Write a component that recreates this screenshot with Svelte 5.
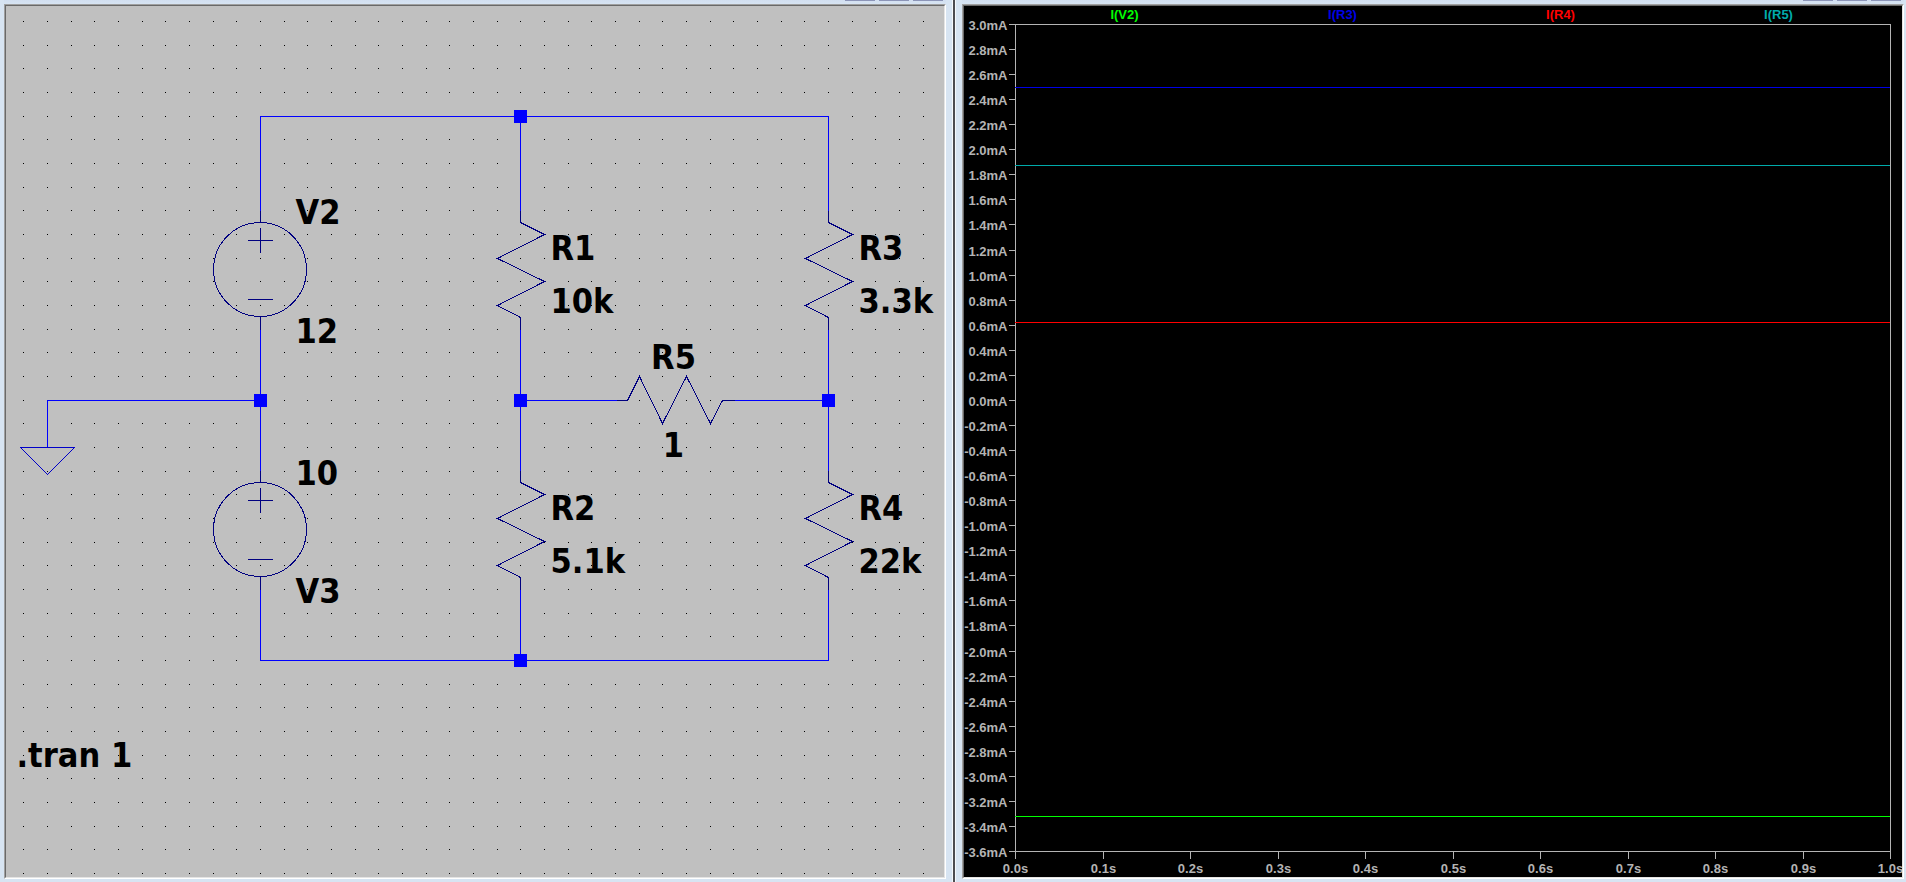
<script>
  let sheetW = $state(938);
  let sheetH = $state(871);
  let plotW = $state(938);
  let plotH = $state(871);

  // Grid points are 23 2/3 px apart, snapped to whole pixels.
  const STEP = 71 / 3;

  const dots = $derived.by(() => {
    let d = '';
    for (let r = 0; 21.34 + r * STEP < sheetH + 4; r++) {
      const y = Math.floor(21.34 + r * STEP);
      for (let c = 0; 22.99 + c * STEP < sheetW + 4; c++) {
        const x = Math.ceil(22.99 + c * STEP);
        d += `M${x - 0.5} ${y}h1`;
      }
    }
    return d;
  });

  const wires = [
    'M260 210V116H828V210',
    'M520 116V210',
    'M260 329V471',
    'M260 400H47V447',
    'M260 589V660H828V589',
    'M520 329V471',
    'M520 589V660',
    'M828 329V471',
    'M520 400H616',
    'M734 400H828'
  ];
  const ground = 'M20 447H74L47 474Z';

  const uprightResistors = [[520, 210], [828, 210], [520, 470], [828, 470]];
  const sources = [[260, 269], [260, 529]];
  const nodes = [[520, 116], [260, 400], [520, 400], [828, 400], [520, 660]];

  const labels = [
    { x: 295, y: 223, t: 'V2' },
    { x: 295, y: 342, t: '12' },
    { x: 295, y: 484, t: '10' },
    { x: 295, y: 602, t: 'V3' },
    { x: 550, y: 259, t: 'R1' },
    { x: 550, y: 312, t: '10k' },
    { x: 550, y: 519, t: 'R2' },
    { x: 550, y: 572, t: '5.1k' },
    { x: 858, y: 259, t: 'R3' },
    { x: 858, y: 312, t: '3.3k' },
    { x: 858, y: 519, t: 'R4' },
    { x: 858, y: 572, t: '22k' },
    { x: 673, y: 368, t: 'R5', mid: true },
    { x: 673, y: 456, t: '1', mid: true },
    { x: 16, y: 766, t: '.tran 1' }
  ];

  const traces = [
    { name: 'I(V2)', value: -3.32, color: '#00ff00' },
    { name: 'I(R3)', value: 2.5, color: '#0000e6' },
    { name: 'I(R4)', value: 0.622, color: '#ff0000' },
    { name: 'I(R5)', value: 1.875, color: '#00aaaa' }
  ];

  const left = 51;
  const top = 18;
  const right = $derived(plotW - 12);
  const bottom = $derived(plotH - 26);
  const legendStep = $derived(Math.floor((right - left) / traces.length));
  const yOf = (v) => Math.round(top + ((3 - v) / 6.6) * (bottom - top));
  const xOf = (t) => Math.round(left + t * (right - left));

  const yTicks = Array.from({ length: 34 }, (_, i) => (30 - 2 * i) / 10);
  const xTicks = Array.from({ length: 11 }, (_, i) => i / 10);
</script>

{#snippet caption()}
  <div class="caption">
    <button aria-label="Minimize"></button>
    <button aria-label="Maximize"></button>
    <button aria-label="Close"></button>
  </div>
{/snippet}

<main>
  <section class="window first">
    {@render caption()}
    <div class="pane sheet" bind:clientWidth={sheetW} bind:clientHeight={sheetH}>
      <svg role="img" aria-label="Schematic">
        <g transform="translate(-5.5 -5.5)">
          <g class="lines">
            <path class="dots" d={dots} />
            {#each wires as d}
              <path class="wire" {d} />
            {/each}
            <path class="ground" d={ground} />
            {#each uprightResistors as [x, y]}
              <path class="part" d="M{x} {y}v12l24 12l-47 24l47 23l-47 24l23 12v12" />
            {/each}
            <path class="part" d="M616 400H627L639 376L662 423L686 376L710 423L722 400H734" />
            {#each sources as [x, y]}
              <ellipse class="part" cx={x - 0.5} cy={y} rx="46.5" ry="47" />
              <path
                class="part"
                d="M{x} {y - 59}v12M{x} {y + 47}v13M{x - 12.5} {y - 29}h25M{x} {y - 41.5}v25M{x - 12.5} {y + 30}h25"
              />
            {/each}
            {#each nodes as [x, y]}
              <rect class="node" x={x - 6.5} y={y - 6.5} width="13" height="13" />
            {/each}
          </g>
          {#each labels as l}
            <text class="label" class:mid={l.mid} x={l.x} y={l.y}>{l.t}</text>
          {/each}
        </g>
      </svg>
    </div>
  </section>

  <div class="divider"></div>

  <section class="window second">
    {@render caption()}
    <div class="pane plot" bind:clientWidth={plotW} bind:clientHeight={plotH}>
      <svg role="img" aria-label="Waveforms">
        <g transform="translate(0.5 0.5)">
          <g class="lines axis">
            <rect x={left} y={top} width={right - left} height={bottom - top} />
            {#each yTicks as v}
              <path d="M{left - 7} {yOf(v)}H{left}" />
            {/each}
            {#each xTicks as t}
              <path d="M{xOf(t)} {bottom}v7" />
            {/each}
          </g>
          <g class="lines">
            {#each traces as s}
              <path d="M{left - 0.5} {yOf(s.value)}H{right - 0.5}" stroke={s.color} />
            {/each}
          </g>
          {#each traces as s, i}
            <text class="mid" x={left + 109 + i * legendStep} y="12" fill={s.color}>{s.name}</text>
          {/each}
          {#each yTicks as v}
            <text class="end tick" x={left - 8} y={yOf(v) + 5}>{v.toFixed(1)}mA</text>
          {/each}
          {#each xTicks as t}
            <text class="mid tick" x={xOf(t)} y={bottom + 21}>{t.toFixed(1)}s</text>
          {/each}
        </g>
      </svg>
    </div>
  </section>
</main>

<style>
  :global(body) {
    margin: 0;
    background: #d7e4f2;
  }

  main {
    display: flex;
    height: 100vh;
    background: #d7e4f2;
    overflow: hidden;
  }

  .window {
    flex: 1 1 0;
    min-width: 0;
    display: flex;
    flex-direction: column;
    box-sizing: border-box;
    padding-bottom: 3px;
  }

  .first {
    flex-basis: 2px;
    padding-left: 4px;
    padding-right: 6px;
  }

  .second {
    padding-left: 6px;
    padding-right: 2px;
  }

  .caption {
    display: flex;
    justify-content: flex-end;
    gap: 4px;
    height: 4px;
    padding-right: 3px;
    background: linear-gradient(#d2dff0, #d7e4f2);
  }

  .caption button {
    width: 30px;
    height: 1px;
    padding: 0;
    border: 0;
    background: #8c95b8;
  }

  .pane {
    flex: 1;
    min-height: 0;
    position: relative;
    border: 2px solid;
    border-color: #a0a0a0 #ffffff #ffffff #a0a0a0;
  }

  .pane::before {
    content: '';
    position: absolute;
    inset: -1px;
    border: 1px solid;
    border-color: #696969 #e3e3e3 #e3e3e3 #696969;
    pointer-events: none;
  }

  .divider {
    width: 2px;
    background: #4c4c50;
    border-left: 1px solid #f4f8fc;
    border-right: 1px solid #f4f8fc;
  }

  svg {
    position: absolute;
    inset: 0;
    width: 100%;
    height: 100%;
    overflow: hidden;
  }

  .sheet {
    background: #c0c0c0;
  }

  .plot {
    background: #000000;
  }

  .lines {
    fill: none;
    stroke-width: 1;
    shape-rendering: crispEdges;
  }

  .dots {
    stroke: #000000;
  }

  .wire {
    stroke: #0000ff;
    stroke-linecap: square;
  }

  .ground {
    stroke: #0000c8;
  }

  .part {
    stroke: #000080;
  }

  .node {
    fill: #0000ff;
  }

  .label {
    font: bold 34px 'DejaVu Sans Condensed', 'Noto Sans', sans-serif;
    fill: #000000;
  }

  .axis {
    stroke: #b4b4b4;
  }

  .plot text {
    font: bold 13px 'Liberation Sans', Arial, sans-serif;
  }

  .tick {
    fill: #b4b4b4;
  }

  .mid {
    text-anchor: middle;
  }

  .end {
    text-anchor: end;
  }
</style>
